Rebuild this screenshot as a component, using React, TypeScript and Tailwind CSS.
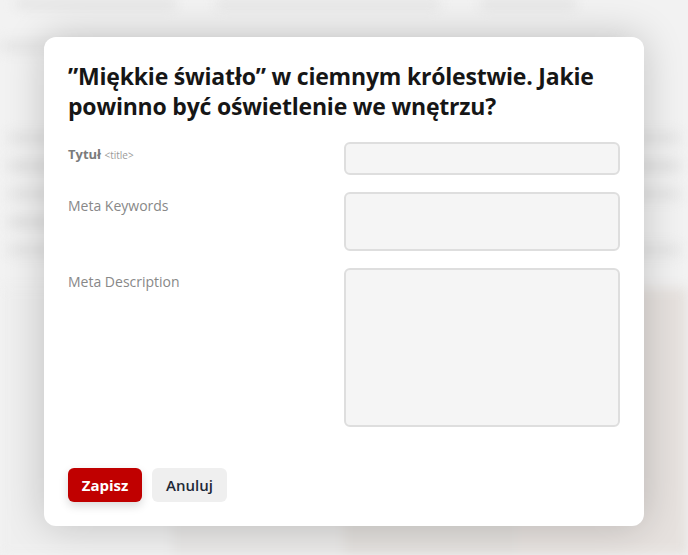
import React from "react";

export default function App() {
  return (
    <div className="relative h-[555px] w-[688px] overflow-hidden bg-[#f2f2f2] font-['Open_Sans',sans-serif]">
      {/* blurred page behind the dialog */}
      <div className="flex h-full flex-col blur-[6px]">
        <div className="flex gap-10 px-4 pt-0">
          <div className="h-2 w-40 rounded bg-[#e0e0e0]" />
          <div className="h-2 w-56 rounded bg-[#e2e2e2]" />
          <div className="h-2 w-24 rounded bg-[#e0e0e0]" />
        </div>
        <div className="mt-8 h-3 w-[620px] bg-[#e6e6e6]" />
        <div className="mt-[80px] flex flex-col gap-4 px-2">
          <div className="h-3 w-full bg-[#e5e5e5]" />
          <div className="h-3 w-full bg-[#e2e2e2]" />
          <div className="h-3 w-full bg-[#e5e5e5]" />
          <div className="h-3 w-[600px] bg-[#e2e2e2]" />
          <div className="h-3 w-full bg-[#e5e5e5]" />
        </div>
        <div className="mt-8 flex flex-1 bg-[#e6e4e2]">
          <div className="w-1/4 bg-[#efefef]" />
          <div className="w-1/4 bg-[#e8e7e6]" />
          <div className="w-1/4 bg-[#e2dfdc]" />
          <div className="w-1/4 bg-[#e6e1de]" />
        </div>
      </div>

      {/* dialog */}
      <div className="absolute left-[44px] top-[37px] w-[600px] rounded-xl bg-white p-6 shadow-[0_0_40px_rgba(0,0,0,0.2)]">
        <h1 className="mb-[21px] text-[23px] font-bold leading-[30px] tracking-[-0.2px] text-[#161616]">
          ”Miękkie światło” w ciemnym królestwie. Jakie powinno być oświetlenie we wnętrzu?
        </h1>

        <div className="grid grid-cols-2 gap-y-[17px]">
          <label className="pt-[3px] text-[13px] text-[#7b7b7b]">
            <span className="font-bold">Tytuł</span>{" "}
            <span className="text-[10px] text-[#9a9a9a]">&lt;title&gt;</span>
          </label>
          <input className="h-[33px] w-full rounded-md border-2 border-[#dedede] bg-[#f5f5f5] outline-none" />

          <label className="pt-[3px] text-[14px] text-[#888]">Meta Keywords</label>
          <textarea className="h-[59px] w-full resize-none rounded-md border-2 border-[#dedede] bg-[#f5f5f5] outline-none" />

          <label className="pt-[3px] text-[14px] text-[#888]">Meta Description</label>
          <textarea className="h-[159px] w-full resize-none rounded-md border-2 border-[#dedede] bg-[#f5f5f5] outline-none" />
        </div>

        <div className="mt-[41px] flex gap-[10px]">
          <button className="h-[34px] w-[74px] rounded-md bg-[#c00000] text-[15px] font-bold text-white shadow-[0_4px_10px_rgba(0,0,0,0.15)]">
            Zapisz
          </button>
          <button className="h-[34px] w-[75px] rounded-md bg-[#efefef] text-[15px] font-semibold text-[#1e2937]">
            Anuluj
          </button>
        </div>
      </div>
    </div>
  );
}
